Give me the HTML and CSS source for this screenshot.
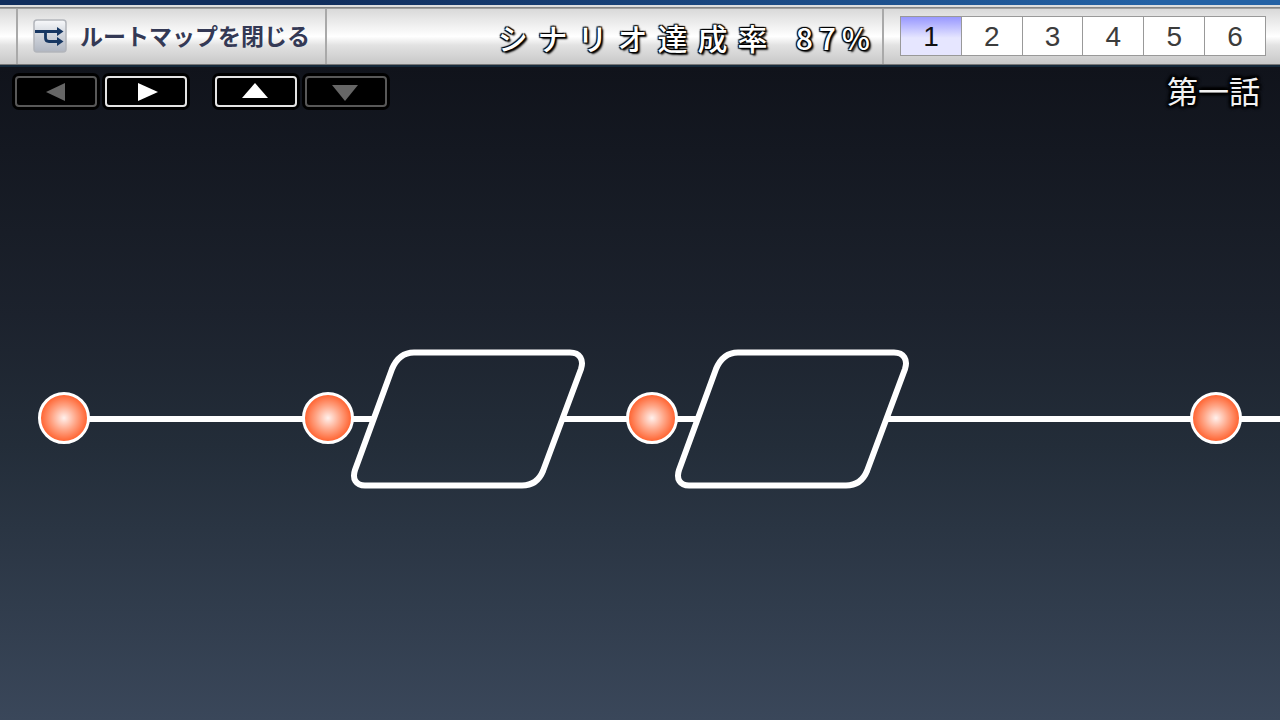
FILE: index.html
```html
<!DOCTYPE html>
<html lang="ja">
<head>
<meta charset="utf-8">
<meta name="viewport" content="width=device-width, initial-scale=1">
<title>ルートマップ</title>
<link rel="stylesheet" href="styles.css">
</head>
<body>
<header class="topbar">
  <button class="close-map" type="button">
    <svg class="route-icon" viewBox="0 0 34 34" aria-hidden="true">
      <defs>
        <linearGradient id="tile" x1="0" y1="0" x2="0" y2="1">
          <stop offset="0" stop-color="#f8f9fb"/>
          <stop offset="0.4" stop-color="#d6dae1"/>
          <stop offset="1" stop-color="#b0b6c1"/>
        </linearGradient>
      </defs>
      <rect x="1" y="1" width="32" height="32" rx="3" fill="url(#tile)" stroke="#b2b5bb" stroke-width="1.5"/>
      <path d="M2 12.500H26M12.500 12.500V19Q12.500 22.500 16 22.500H26" fill="none" stroke="#173762" stroke-width="2.800"/>
      <path d="M24 8L30.500 12.500L24 17ZM24 18L30.500 22.500L24 27Z" fill="#173762"/>
    </svg>
    <span class="close-label">ルートマップを閉じる</span>
  </button>
  <h1 class="rate"><span class="rate-label">シナリオ達成率</span><span class="rate-value">87%</span></h1>
  <nav class="chapters" aria-label="話数">
    <div class="tabs">
      <button class="tab tab-current" type="button" aria-current="page">1</button>
      <button class="tab" type="button">2</button>
      <button class="tab" type="button">3</button>
      <button class="tab" type="button">4</button>
      <button class="tab" type="button">5</button>
      <button class="tab" type="button">6</button>
    </div>
  </nav>
</header>
<main class="stage">
  <div class="toolbar">
    <div class="arrows">
      <button class="arrow" type="button" aria-label="左へ" disabled><svg viewBox="0 0 28 20"><path d="M4 10L23 1V19Z"/></svg></button>
      <button class="arrow" type="button" aria-label="右へ"><svg viewBox="0 0 28 20"><path d="M26 10L6 1V19Z"/></svg></button>
    </div>
    <div class="arrows">
      <button class="arrow" type="button" aria-label="上へ"><svg viewBox="0 0 28 20"><path d="M13 1L26 16H0Z"/></svg></button>
      <button class="arrow" type="button" aria-label="下へ" disabled><svg viewBox="0 0 28 20"><path d="M13 19L26 3H0Z"/></svg></button>
    </div>
    <h2 class="episode">第一話</h2>
  </div>
  <div class="map">
    <svg class="route" viewBox="0 0 1600 480" width="1600" height="480" role="img" aria-label="ルートマップ">
      <defs>
        <radialGradient id="orb">
          <stop offset="0" stop-color="#fff1ed"/>
          <stop offset="0.5" stop-color="#ffa586"/>
          <stop offset="0.92" stop-color="#ff6837"/>
        </radialGradient>
        <path id="box" d="M86 -66.500H242C252 -66.500 256 -59 253 -50L215 52Q209 66.500 194 66.500H37C28 66.500 24 60 27 51L64 -50Q71 -66.500 86 -66.500Z"/>
        <circle id="node" r="24.500"/>
      </defs>
      <g class="links">
        <path d="M64 303H372M562 303H696M886 303H1600"/>
        <use href="#box" x="328" y="303"/>
        <use href="#box" x="652" y="303"/>
      </g>
      <g class="nodes">
        <use href="#node" x="64" y="302"/>
        <use href="#node" x="328" y="302"/>
        <use href="#node" x="652" y="302"/>
        <use href="#node" x="1216" y="302"/>
      </g>
    </svg>
  </div>
</main>
</body>
</html>
```
FILE: styles.css
```css
* {
  box-sizing: border-box;
}

body {
  margin: 0;
  min-height: 100vh;
  display: flex;
  flex-direction: column;
  font-family: "Liberation Sans", "Noto Sans CJK JP", sans-serif;
  background: #10141c;
}

button {
  font: inherit;
  cursor: pointer;
}

.topbar {
  display: flex;
  align-items: stretch;
  height: 67px;
  padding: 9px 14px 3px 16px;
  background:
    linear-gradient(#777 0 1px, #15293b 1px 3px) bottom / 100% 3px no-repeat,
    linear-gradient(#dedede 0 2px, #868686 2px 3px, #a2a2a2 3px 4px) 0 5px / 100% 4px no-repeat,
    linear-gradient(90deg, #112e5d 25%, #2462a5 90%) top / 100% 5px no-repeat,
    linear-gradient(#d9d9d9, #f0f0f0 30%, #fff 50%, #e2e2e2 66%, #c8c8c8) 0 9px / 100% 55px no-repeat;
}

.close-map {
  display: flex;
  align-items: center;
  gap: 13px;
  padding: 0 15px 2px 15px;
  border: 0 solid #a9a9a9;
  border-width: 0 2px;
  background: none;
  color: #343955;
  font-family: "Noto Sans CJK JP", sans-serif;
  font-size: 23px;
  font-weight: 700;
  line-height: 32px;
  white-space: nowrap;
}

.close-label {
  padding-bottom: 2px;
}

.route-icon {
  flex: none;
  width: 34px;
  height: 34px;
}

.rate {
  display: flex;
  align-items: center;
  gap: 18px;
  margin: 0 0 0 auto;
  padding: 0 6px 0 0;
  color: #fff;
  font-family: "Noto Sans CJK JP", sans-serif;
  font-size: 30px;
  font-weight: 500;
  line-height: 40px;
  white-space: nowrap;
  text-shadow: 1px 1px 1px #000, -1px -1px 1px #000, 1px -1px 1px #000, -1px 1px 1px #000, 2px 2px 2px #000;
}

.rate-label {
  letter-spacing: 10px;
}

.rate-value {
  letter-spacing: 6px;
}

.chapters {
  display: flex;
  align-items: center;
  padding: 0 0 2px 16px;
  border-left: 2px solid #a9a9a9;
}

.tabs {
  display: flex;
  width: 366px;
  border: 1px solid #999;
}

.tab {
  flex: 1;
  height: 38px;
  padding: 2px 0 0;
  border: 0;
  border-left: 1px solid #999;
  background: #fff;
  color: #3c3c3c;
  font-family: "Liberation Sans", sans-serif;
  font-size: 28px;
  line-height: 36px;
}

.tab-current {
  border-left: 0;
  background: linear-gradient(#9898ff, #e6e6ff 55%);
  color: #111;
}

.stage {
  flex: 1;
  display: flex;
  flex-direction: column;
  background: linear-gradient(#10131b, #1c222d 38%, #232d39 58%, #3a475a);
}

.toolbar {
  display: flex;
  align-items: flex-start;
  gap: 28px;
  height: 49px;
  padding: 9px 20px 0 15px;
}

.arrows {
  display: flex;
  gap: 8px;
}

.arrow {
  display: flex;
  align-items: center;
  justify-content: center;
  width: 82px;
  height: 31px;
  padding: 0;
  border: 2px solid #e4e4e4;
  border-radius: 4px;
  background: #000;
  box-shadow: 0 0 0 3px #000;
}

.arrow svg {
  width: 28px;
  height: 20px;
  fill: #fff;
}

.arrow:disabled {
  border-color: #585858;
}

.arrow:disabled svg {
  fill: #666;
}

.episode {
  margin: 0 0 0 auto;
  color: #f2f2f2;
  font-family: "Noto Sans CJK JP", sans-serif;
  font-size: 31px;
  font-weight: 400;
  line-height: 28px;
  text-shadow: 0 0 3px #000, 0 0 3px #000, 2px 2px 3px #000, -2px -2px 3px #000, 2px -2px 3px #000, -2px 2px 3px #000;
}

.map {
  flex: 1;
  min-height: 480px;
  overflow: hidden;
}

.route {
  display: block;
}

.links {
  fill: none;
  stroke: #fff;
  stroke-width: 6px;
}

.nodes {
  fill: url(#orb);
  stroke: #fff;
  stroke-width: 3px;
}
```
